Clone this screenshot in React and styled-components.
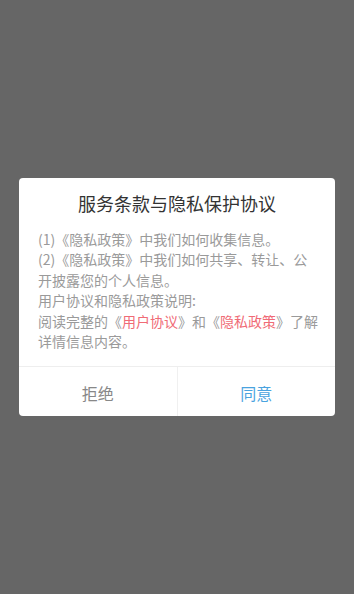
import React from 'react';
import styled, { createGlobalStyle } from 'styled-components';

const GlobalStyle = createGlobalStyle`
  html, body {
    margin: 0;
    padding: 0;
    background: #666666;
  }
  body {
    font-family: "Noto Sans CJK SC", "Noto Sans", sans-serif;
  }
`;

const Overlay = styled.div`
  width: 354px;
  height: 594px;
  background: #666666;
  display: flex;
  justify-content: center;
  padding-top: 178px;
  box-sizing: border-box;
`;

const Dialog = styled.div`
  width: 316px;
  height: 238px;
  background: #ffffff;
  border-radius: 4px;
  display: flex;
  flex-direction: column;
  overflow: hidden;
`;

const Title = styled.h2`
  margin: 0;
  padding: 13px 0 0;
  height: 24px;
  line-height: 24px;
  font-size: 18px;
  font-weight: 400;
  color: #333333;
  text-align: center;
`;

const Body = styled.div`
  padding: 14px 17px 0 19px;
  flex: 1;
  font-size: 14px;
  line-height: 20.4px;
  color: #9a9a9a;
`;

const Line = styled.p`
  margin: 0;
`;

const Link = styled.span`
  color: #f06b76;
`;

const Footer = styled.div`
  height: 49px;
  display: flex;
  border-top: 1px solid #eeeeee;
`;

const Button = styled.button`
  flex: 1;
  border: none;
  background: transparent;
  font-family: inherit;
  font-size: 16px;
  color: ${(p) => (p.$primary ? '#4aa3df' : '#888888')};
  padding: 2px 0 0;
  & + & {
    border-left: 1px solid #f0f0f0;
  }
`;

const App = () => (
  <>
    <GlobalStyle />
    <Overlay>
      <Dialog>
        <Title>服务条款与隐私保护协议</Title>
        <Body>
          <Line>(1)《隐私政策》中我们如何收集信息。</Line>
          <Line>(2)《隐私政策》中我们如何共享、转让、公开披露您的个人信息。</Line>
          <Line>用户协议和隐私政策说明:</Line>
          <Line>
            阅读完整的《<Link>用户协议</Link>》和《<Link>隐私政策</Link>》了解详情信息内容。
          </Line>
        </Body>
        <Footer>
          <Button>拒绝</Button>
          <Button $primary>同意</Button>
        </Footer>
      </Dialog>
    </Overlay>
  </>
);

export default App;
